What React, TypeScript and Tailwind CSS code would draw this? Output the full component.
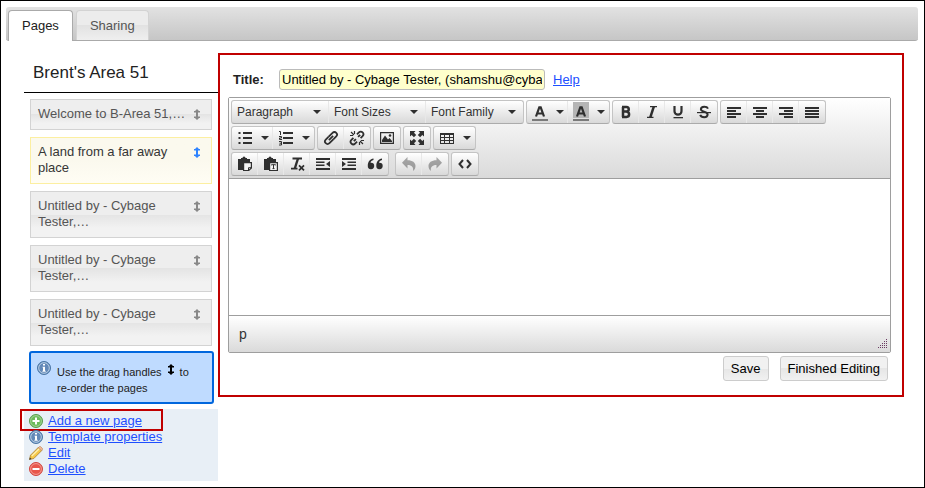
import React from "react";

const INK = "#2f2f2f";

function Glyph({ children, className = "" }: { children: React.ReactNode; className?: string }) {
  return (
    <svg
      viewBox="0 0 16 16"
      aria-hidden="true"
      className={`h-4 w-4 shrink-0 ${className}`}
      fill={INK}
      stroke="none"
    >
      {children}
    </svg>
  );
}

function Caret() {
  return (
    <svg viewBox="0 0 8 4" aria-hidden="true" className="h-1 w-2 shrink-0" fill={INK}>
      <path d="M0 0h8L4 4z" />
    </svg>
  );
}

function DragIcon({ className = "" }: { className?: string }) {
  return (
    <svg viewBox="0 0 8 11" aria-hidden="true" className={`h-[11px] w-2 shrink-0 ${className}`} fill="currentColor">
      <path d="M4 0 7 3H5v5h2L4 11 1 8h2V3H1z" />
      <path d="M1 2h6v1.500H1zM1 7.500h6V9H1z" />
    </svg>
  );
}

const line = { fill: "none", stroke: INK, strokeWidth: 2 } as const;

const icons = {
  bold: (
    <Glyph>
      <path d="M5 3.100v9.800M4 3.100h4.500a2.200 2.200 0 0 1 0 4.500H5M8.500 7.700a2.600 2.600 0 0 1 0 5.200H4" {...line} strokeWidth={2.500} />
    </Glyph>
  ),
  italic: (
    <Glyph>
      <path d="M6 2.600h7M3 13.400h6.500" {...line} strokeWidth={1.300} />
      <path d="M9.800 2.700 6.300 13.300" {...line} strokeWidth={2.500} />
    </Glyph>
  ),
  underline: (
    <Glyph>
      <path d="M4.500 2v5.200a3.500 3.500 0 0 0 7 0V2" {...line} strokeWidth={2.200} />
      <path d="M3.500 13h9.500v1.300H3.500z" />
    </Glyph>
  ),
  strike: (
    <Glyph>
      <path
        d="M12 4.600C11.400 3.300 10 2.800 8.300 2.800 6.200 2.800 4.900 3.700 4.900 5.300 4.900 8.600 11.600 7 11.600 10.600c0 1.700-1.400 2.600-3.400 2.600-2 0-3.500-.8-4-2.300"
        {...line}
      />
      <path d="M1 8h14v1.200H1z" />
    </Glyph>
  ),
  left: (
    <Glyph>
      <path d="M1 3h14v2H1zM1 6h9v2H1zM1 9h14v2H1zM1 12h9v2H1z" />
    </Glyph>
  ),
  center: (
    <Glyph>
      <path d="M1 3h14v2H1zM4 6h8v2H4zM1 9h14v2H1zM4 12h8v2H4z" />
    </Glyph>
  ),
  right: (
    <Glyph>
      <path d="M1 3h14v2H1zM6 6h9v2H6zM1 9h14v2H1zM6 12h9v2H6z" />
    </Glyph>
  ),
  justify: (
    <Glyph>
      <path d="M1 3h14v2H1zM1 6h14v2H1zM1 9h14v2H1zM1 12h14v2H1z" />
    </Glyph>
  ),
  bullets: (
    <Glyph>
      <path d="M6 2h9v2H6zM6 7h9v2H6zM6 12h9v2H6z" />
      <path d="M1.500 2h2v2h-2zM1.500 7h2v2h-2zM1.500 12h2v2h-2z" />
    </Glyph>
  ),
  numbers: (
    <Glyph>
      <path d="M5 2h10v2H5zM5 7h10v2H5zM5 12h10v2H5z" />
      <path d="M1 1.500h1.500V5M1 6.500h2.500V8H1.500v1.500H4M1 11.500h2.500v3.500H1M1.500 13.200h2" {...line} strokeWidth={1} />
    </Glyph>
  ),
  link: (
    <Glyph>
      <g transform="rotate(-45 8 8)" {...line} strokeWidth={1.8}>
        <path d="M9 10.600H3.200a2.600 2.600 0 0 1 0-5.200H7" />
        <path d="M7 5.400h5.800a2.600 2.600 0 0 1 0 5.200H9" />
        <path d="M5 8h6" />
      </g>
    </Glyph>
  ),
  unlink: (
    <Glyph>
      <g transform="rotate(-45 8 8)" {...line} strokeWidth={1.8}>
        <path d="M5.500 10.600H2.700a2.600 2.600 0 0 1 0-5.200h2.800M3.500 8h3" />
        <path d="M10.500 5.400h2.800a2.600 2.600 0 0 1 0 5.200h-2.800M9.500 8h3" />
      </g>
      <path d="M5.500 1v3M1 5.500h3M10.500 15v-3M15 10.500h-3M2 2l3 3M14 14l-3-3" {...line} strokeWidth={1.200} />
    </Glyph>
  ),
  image: (
    <Glyph>
      <path fillRule="evenodd" d="M1 2h14v12H1zM2.200 3.200v9.600h11.600V3.200z" />
      <path d="M3 12V10l3-4.500 3 4 1.500-1.500L13 11v1z" />
      <circle cx="11" cy="5.500" r="1.300" />
    </Glyph>
  ),
  fullscreen: (
    <Glyph>
      <path d="M1 1h5.500L5 2.700l2.200 2.200-2.300 2.300L2.700 5 1 6.500zM15 1v5.500L13.300 5l-2.200 2.200-2.300-2.300L11 2.700 9.500 1zM1 15V9.500L2.700 11l2.200-2.200 2.300 2.300L5 13.300 6.500 15zM15 15H9.500l1.500-1.700-2.200-2.200 2.300-2.300 2.200 2.200L15 9.500z" />
    </Glyph>
  ),
  table: (
    <Glyph>
      <path fillRule="evenodd" d="M1 3h14v11H1zM2 5v2h3V5zM6 5v2h4V5zM11 5v2h3V5zM2 8v2h3V8zM6 8v2h4V8zM11 8v2h3V8zM2 11v2h3v-2zM6 11v2h4v-2zM11 11v2h3v-2z" />
    </Glyph>
  ),
  paste: (
    <Glyph>
      <path d="M1 3h3V2h1.500a1.500 1.500 0 0 1 3 0H10v1h3v3h-2V5H3v8h3v1H1z" />
      <path d="M2 4h9v2H6v7H2z" />
      <path d="M6.600 6.600h7.800v5.400l-2.600 2.500H6.600z" fill="#f4f4f4" stroke={INK} strokeWidth={1.200} />
      <path d="M11.500 14.500v-2.800h2.800" fill="none" stroke={INK} strokeWidth={1} />
    </Glyph>
  ),
  pasteText: (
    <Glyph>
      <path d="M1 3h3V2h1.500a1.500 1.500 0 0 1 3 0H10v1h3v3h-2V5H3v8h3v1H1z" />
      <path d="M2 4h9v2H6v7H2z" />
      <path d="M6.600 6.600h7.800v7.900H6.600z" fill="#f4f4f4" stroke={INK} strokeWidth={1.200} />
      <path d="M8.500 9.300V8.700h4v.6M10.500 8.700v4M9.500 12.600h2" {...line} strokeWidth={1} />
    </Glyph>
  ),
  clear: (
    <Glyph>
      <path d="M3.500 2.500h9.500M2 12.700h6.500" {...line} strokeWidth={1.800} />
      <path d="M9 2.500 5.800 12.500" {...line} strokeWidth={2.400} />
      <path d="m10 9.300 5 5M15 9.300l-5 5" {...line} strokeWidth={1.700} />
    </Glyph>
  ),
  outdent: (
    <Glyph>
      <path d="M1 2h14v2H1zM1 5.500h8.500v1.500H1zM1 8.500h8.500V10H1zM1 12h14v2H1zM15 5v6l-4-3z" />
    </Glyph>
  ),
  indent: (
    <Glyph>
      <path d="M1 2h14v2H1zM6.500 5.500H15v1.500H6.500zM6.500 8.500H15V10H6.500zM1 12h14v2H1zM1 5v6l4-3z" />
    </Glyph>
  ),
  quote: (
    <Glyph>
      <path d="M6.500 2.500C3 3 .8 5.500.8 9.800A3.200 3.200 0 1 0 4 6.800h-.5c.3-1.300 1.200-2.200 3-2.700zM15 2.500c-3.500.5-5.700 3-5.700 7.300a3.200 3.200 0 1 0 3.200-3H12c.3-1.300 1.200-2.200 3-2.700z" />
    </Glyph>
  ),
  undo: (
    <Glyph className="opacity-40">
      <path d="M6.500 1v3.200c5 0 8 2.300 8 5.800 0 2-1 4-2.500 5 .8-3.500-1-6-5.500-6v3.500L1 6.800z" />
    </Glyph>
  ),
  redo: (
    <Glyph className="opacity-40">
      <path d="M9.500 1v3.200c-5 0-8 2.300-8 5.800 0 2 1 4 2.500 5-.8-3.500 1-6 5.500-6v3.500L15 6.800z" />
    </Glyph>
  ),
  code: (
    <Glyph>
      <path d="M6 4 2.500 8 6 12M10 4l3.500 4-3.500 4" {...line} />
    </Glyph>
  ),
  foreColor: (
    <svg viewBox="0 0 16 20" aria-hidden="true" className="h-5 w-4 shrink-0">
      <path d="M4 14.500 7.300 5.300h1.400L12 14.500M5.500 11.500h5" {...line} strokeWidth={2.200} />
      <path d="M0 17h16v2H0z" fill="#7a7a7a" />
    </svg>
  ),
  backColor: (
    <svg viewBox="0 0 16 20" aria-hidden="true" className="h-5 w-4 shrink-0">
      <path d="M0 0h16v16H0z" fill="#b5b5b5" />
      <path d="M4 14.500 7.300 5.300h1.400L12 14.500M5.500 11.500h5" {...line} strokeWidth={2.200} />
      <path d="M0 17h16v2H0z" fill="#7a7a7a" />
    </svg>
  ),
};

function Group({ children, className = "" }: { children: React.ReactNode; className?: string }) {
  return (
    <div
      className={`flex h-6 divide-x divide-[#e8e8e8] rounded-[3px] border border-[#c4c4c4] border-b-[#ababab] bg-linear-to-b from-white to-[#d9d9d9] ${className}`}
    >
      {children}
    </div>
  );
}

function Tool({ label, icon }: { label: string; icon: React.ReactNode }) {
  return (
    <button type="button" aria-label={label} className="flex w-[26px] items-center justify-center">
      {icon}
    </button>
  );
}

function MenuTool({ label, icon }: { label: string; icon: React.ReactNode }) {
  return (
    <button type="button" aria-label={label} className="flex w-[41px] items-center gap-2 pl-[5px]">
      {icon}
      <Caret />
    </button>
  );
}

function Picker({ label }: { label: string }) {
  return (
    <div className="grid w-[97px] items-center">
      <select
        aria-label={label}
        className="col-start-1 row-start-1 h-full w-full appearance-none bg-transparent pl-[5px] text-xs text-[#333333] outline-none"
      >
        <option>{label}</option>
      </select>
      <span className="pointer-events-none col-start-1 row-start-1 mr-[7px] justify-self-end">
        <Caret />
      </span>
    </div>
  );
}

function InfoIcon() {
  return (
    <svg viewBox="0 0 14 14" aria-hidden="true" className="h-3.5 w-3.5 shrink-0">
      <circle cx="7" cy="7" r="6.500" fill="#5f8ab8" stroke="#4a75a5" />
      <circle cx="7" cy="7" r="5.300" fill="#6389b8" stroke="#c3d5e8" strokeWidth=".9" />
      <path d="M6 3h2v1.600H6zM5.500 5.700H8v4h.7v1H5.400v-1H6V6.600h-.5z" fill="#ffffff" />
    </svg>
  );
}

function AddIcon() {
  return (
    <svg viewBox="0 0 14 14" aria-hidden="true" className="h-3.5 w-3.5 shrink-0">
      <circle cx="7" cy="7" r="6.500" fill="#6dbb5c" stroke="#5a9a4e" />
      <circle cx="7" cy="7" r="5.400" fill="none" stroke="#a6d79b" strokeWidth=".9" />
      <path d="M6 3.500h2V6h2.500v2H8v2.500H6V8H3.500V6H6z" fill="#ffffff" />
    </svg>
  );
}

function DeleteIcon() {
  return (
    <svg viewBox="0 0 14 14" aria-hidden="true" className="h-3.5 w-3.5 shrink-0">
      <circle cx="7" cy="7" r="6.500" fill="#e8574c" stroke="#d0453f" />
      <circle cx="7" cy="7" r="5.400" fill="none" stroke="#f4a39a" strokeWidth=".9" />
      <path d="M3.500 6h7v2h-7z" fill="#ffffff" />
    </svg>
  );
}

function PencilIcon() {
  return (
    <svg viewBox="0 0 14 14" aria-hidden="true" className="h-3.5 w-3.5 shrink-0">
      <path d="M.5 13.500 1.500 9.200 9.500 1.200 12.800 4.500 4.800 12.500z" fill="#f6c94a" stroke="#a77b2d" strokeWidth=".8" />
      <path d="M2.800 10 10.500 2.500" stroke="#fdf0b4" strokeWidth="1.300" />
      <path d="m9.300 1.700 1-1a1 1 0 0 1 1.400 0l1.600 1.600a1 1 0 0 1 0 1.400l-1 1z" fill="#f0b795" stroke="#b98253" strokeWidth=".6" />
      <path d="M.3 13.700l.6-2.200 1.600 1.600z" fill="#333333" />
    </svg>
  );
}

const pages = [
  { title: "Welcome to B-Area 51,…", active: false },
  { title: "A land from a far away place", active: true },
  { title: "Untitled by - Cybage Tester,…", active: false },
  { title: "Untitled by - Cybage Tester,…", active: false },
  { title: "Untitled by - Cybage Tester,…", active: false },
];

const actions = [
  { label: "Add a new page", icon: <AddIcon />, marked: true },
  { label: "Template properties", icon: <InfoIcon />, marked: false },
  { label: "Edit", icon: <PencilIcon />, marked: false },
  { label: "Delete", icon: <DeleteIcon />, marked: false },
];

function Sidebar() {
  return (
    <aside className="w-[194px] shrink-0">
      <h2 className="border-b border-black pt-5 pr-2 pb-2 pl-[9px] text-[17px] leading-[23px] text-[#222222]">
        Brent's Area 51
      </h2>
      <ul className="mx-1.5 mt-1.5 flex flex-col gap-[7px]">
        {pages.map((page, i) => (
          <li
            key={i}
            className={
              page.active
                ? "flex items-start gap-1.5 border border-[#fcefa1] bg-linear-to-b from-[#fbf9ee] from-50% to-[#fffdf4] pt-1.5 pr-2.5 pb-[7px] pl-[7px] text-[#363636]"
                : "flex items-start gap-1.5 border border-[#d3d3d3] bg-[linear-gradient(#eeeeee_50%,#e4e4e4_50%,#f2f2f2_80%)] pt-1.5 pr-2.5 pb-[7px] pl-[7px] text-[#555555]"
            }
          >
            <span className="min-w-0 flex-1">{page.title}</span>
            <DragIcon className={page.active ? "mt-[3px] text-[#2e83ff]" : "mt-[3px] text-[#888888]"} />
          </li>
        ))}
      </ul>
      <div className="mr-1 ml-[5px] mt-[5px] flex gap-1.5 rounded-[3px] border-2 border-[#0066dd] bg-[#bfdbff] pt-2 pr-2 pb-1.5 pl-1.5 text-[11px] text-[#222222]">
        <InfoIcon />
        <p className="pt-[3px]">
          <span className="flex gap-[5px]">
            <span>Use the drag handles</span>
            <DragIcon className="text-black" />
            <span>to</span>
          </span>
          <span className="block">re-order the pages</span>
        </p>
      </div>
      <ul className="mt-[5px] bg-[#e8eff6] py-1 pl-[5px]">
        {actions.map((action) => (
          <li key={action.label} className="relative flex items-center gap-[5px]">
            {action.icon}
            <a href="#" className="text-[#1e4fff] underline">
              {action.label}
            </a>
            {action.marked && (
              <span className="pointer-events-none absolute -top-1 -left-[9px] h-[22px] w-[143px] border-2 border-[#c00000]" />
            )}
          </li>
        ))}
      </ul>
    </aside>
  );
}

function Editor() {
  return (
    <div className="mt-[7px] rounded-[2px] border border-[#9e9e9e]">
      <div className="flex flex-col gap-0.5 border-b border-[#9e9e9e] bg-linear-to-b from-white to-[#dadada] p-0.5">
        <div className="flex gap-0.5">
          <Group>
            <Picker label="Paragraph" />
            <Picker label="Font Sizes" />
            <Picker label="Font Family" />
          </Group>
          <Group>
            <MenuTool label="Text color" icon={icons.foreColor} />
            <MenuTool label="Background color" icon={icons.backColor} />
          </Group>
          <Group>
            <Tool label="Bold" icon={icons.bold} />
            <Tool label="Italic" icon={icons.italic} />
            <Tool label="Underline" icon={icons.underline} />
            <Tool label="Strikethrough" icon={icons.strike} />
          </Group>
          <Group>
            <Tool label="Align left" icon={icons.left} />
            <Tool label="Align center" icon={icons.center} />
            <Tool label="Align right" icon={icons.right} />
            <Tool label="Justify" icon={icons.justify} />
          </Group>
        </div>
        <div className="flex gap-0.5">
          <Group>
            <MenuTool label="Bullet list" icon={icons.bullets} />
            <MenuTool label="Numbered list" icon={icons.numbers} />
          </Group>
          <Group>
            <Tool label="Insert link" icon={icons.link} />
            <Tool label="Remove link" icon={icons.unlink} />
          </Group>
          <Group>
            <Tool label="Insert image" icon={icons.image} />
          </Group>
          <Group>
            <Tool label="Fullscreen" icon={icons.fullscreen} />
          </Group>
          <Group>
            <MenuTool label="Table" icon={icons.table} />
          </Group>
        </div>
        <div className="flex gap-0.5">
          <Group>
            <Tool label="Paste" icon={icons.paste} />
            <Tool label="Paste as text" icon={icons.pasteText} />
            <Tool label="Clear formatting" icon={icons.clear} />
            <Tool label="Decrease indent" icon={icons.outdent} />
            <Tool label="Increase indent" icon={icons.indent} />
            <Tool label="Blockquote" icon={icons.quote} />
          </Group>
          <Group className="ml-1">
            <Tool label="Undo" icon={icons.undo} />
            <Tool label="Redo" icon={icons.redo} />
          </Group>
          <Group>
            <Tool label="Source code" icon={icons.code} />
          </Group>
        </div>
      </div>
      <textarea aria-label="Page content" className="block h-[136px] w-full resize-none bg-white p-2 outline-none" />
      <div className="flex h-[37px] items-center justify-between border-t border-[#9e9e9e] bg-linear-to-b from-white to-[#dadada] pr-0.5 pl-2.5 text-sm text-[#333333]">
        <span>p</span>
        <svg viewBox="0 0 10 10" aria-hidden="true" className="mb-[3px] h-2.5 w-2.5 self-end" fill="#6b3a62">
          <path d="M8 0h1v1H8zM6 2h1v1H6zM8 2h1v1H8zM4 4h1v1H4zM6 4h1v1H6zM8 4h1v1H8zM2 6h1v1H2zM4 6h1v1H4zM6 6h1v1H6zM8 6h1v1H8zM0 8h1v1H0zM2 8h1v1H2zM4 8h1v1H4zM6 8h1v1H6zM8 8h1v1H8z" />
        </svg>
      </div>
    </div>
  );
}

const actionButton =
  "h-[25px] rounded-[3px] border border-[#cccccc] bg-[linear-gradient(#f1f1f1_50%,#e6e6e6_50%,#f1f1f1)] px-[7px] text-black";

export default function App() {
  return (
    <div className="min-h-screen border border-black bg-white px-[5px] pt-1.5 font-['Liberation_Sans',Arial,sans-serif] text-[13px] leading-4">
      <nav
        role="tablist"
        className="mr-px flex h-[34px] items-end gap-[3px] rounded-[3px] border-b border-[#aaaaaa] bg-linear-to-b from-[#e2e2e2] to-[#c6c6c6] pl-0.5"
      >
        <button
          type="button"
          role="tab"
          aria-selected="true"
          className="-mb-px h-[31px] rounded-t-[4px] border border-b-0 border-[#aaaaaa] bg-white px-[13px] text-[#212121]"
        >
          Pages
        </button>
        <button
          type="button"
          role="tab"
          aria-selected="false"
          className="h-[30px] rounded-t-[4px] border border-b-0 border-[#d3d3d3] bg-[linear-gradient(#ececec_50%,#e2e2e2_50%,#efefef)] px-[13px] text-[#555555]"
        >
          Sharing
        </button>
      </nav>
      <div className="mr-[15px] ml-[18px] flex items-start">
        <Sidebar />
        <main className="mt-3 min-w-0 flex-1 border-2 border-[#c00000] pt-3.5 pr-[11px] pb-3.5 pl-2">
          <div className="flex items-center pl-[5px]">
            <label htmlFor="page-title" className="w-[46px] font-bold text-[#222222]">
              Title:
            </label>
            <input
              id="page-title"
              type="text"
              defaultValue="Untitled by - Cybage Tester, (shamshu@cybage.com)"
              className="h-[21px] w-[266px] rounded-[3px] border border-[#bbbbbb] bg-[#ffffcc] px-0.5 text-black outline-none"
            />
            <a href="#" className="ml-2 text-[#1e4fff] underline">
              Help
            </a>
          </div>
          <Editor />
          <div className="mt-[3px] mr-[3px] flex justify-end gap-[11px]">
            <button type="button" className={actionButton}>
              Save
            </button>
            <button type="button" className={actionButton}>
              Finished Editing
            </button>
          </div>
        </main>
      </div>
    </div>
  );
}
